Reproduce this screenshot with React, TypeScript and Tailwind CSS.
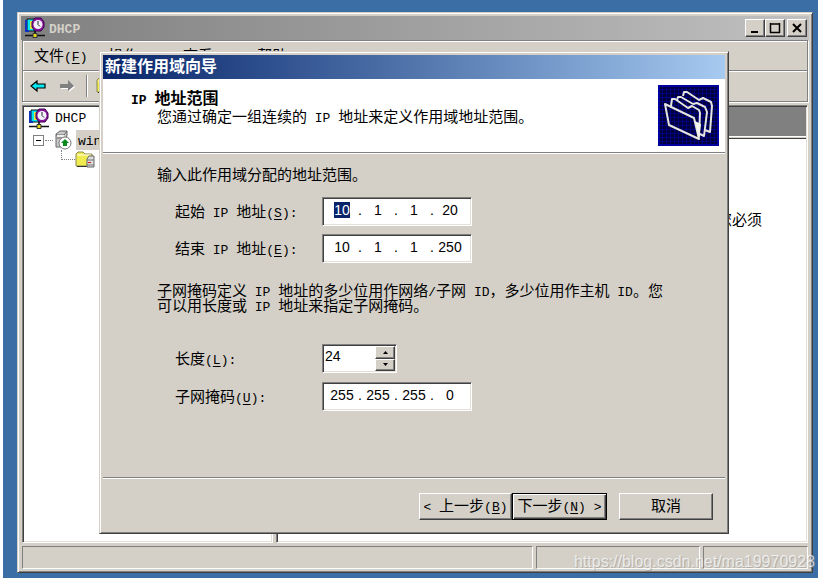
import React from "react";

const raised =
  "border border-t-[#d4d0c8] border-l-[#d4d0c8] border-r-[#404040] border-b-[#404040] shadow-[inset_1px_1px_0_#ffffff,inset_-1px_-1px_0_#808080]";
const raisedButton =
  "bg-[#d4d0c8] border border-t-white border-l-white border-r-[#404040] border-b-[#404040] shadow-[inset_-1px_-1px_0_#808080]";
const sunken =
  "bg-white border border-t-[#808080] border-l-[#808080] border-r-white border-b-white shadow-[inset_1px_1px_0_#404040,inset_-1px_-1px_0_#e4e0d8]";

/* Sets half-width Latin runs in a narrow mono face beside full-width Chinese. */
function T({ text, hot }: { text: string; hot?: string }) {
  return (
    <>
      {text.split(/([\x20-\x7e]+)/).map((part, i) =>
        i % 2 === 1 ? (
          <span key={i} className="font-['Liberation_Mono',monospace] text-[13px] leading-0 whitespace-pre">
            {part}
          </span>
        ) : (
          part
        ),
      )}
      {hot && (
        <span className="font-['Liberation_Mono',monospace] text-[13px] leading-0">
          (<span className="underline underline-offset-2">{hot}</span>)
        </span>
      )}
    </>
  );
}

function DhcpIcon() {
  return (
    <svg className="shrink-0" width="20" height="22" viewBox="0 0 20 22" aria-hidden="true">
      <path d="M2 2h9v12H2z" fill="#00e5f5" stroke="#111" />
      <path d="M1 3v11h3" fill="none" stroke="#1030c0" strokeWidth="2" />
      <path d="M5 4h3v8H5z" fill="#e8e840" />
      <path d="M10 1h6l3 4v5l-3 4h-6L7 10V5z" fill="#8a159c" stroke="#38004c" />
      <circle cx="13" cy="7.5" r="4.5" fill="#f4f0ff" />
      <path d="M13 4v3.5l2 2" fill="none" stroke="#222" />
      <path d="M10 14v4M0 18.5h20" stroke="#111" strokeWidth="1.6" />
      <path d="M8 16.5h4v4H8z" fill="#e5dc20" stroke="#333" />
    </svg>
  );
}

function ServerIcon() {
  return (
    <svg className="shrink-0" width="17" height="20" viewBox="0 0 17 20" aria-hidden="true">
      <path d="M1 4l4-3h7v4l-2 12H1z" fill="#c9c9c9" stroke="#666" />
      <path d="M1 5h8l3-4M2 8h7" fill="none" stroke="#666" />
      <path d="M2 5h7v2H2z" fill="#eee" />
      <circle cx="10" cy="13" r="6" fill="#fff" stroke="#777" />
      <path d="M10 9l4 4h-2v3H8v-3H6z" fill="#0b8a1e" />
    </svg>
  );
}

function FolderIcon() {
  return (
    <svg className="shrink-0" width="21" height="18" viewBox="0 0 21 18" aria-hidden="true">
      <path d="M1 3l2-2h5l2 2h7v12H1z" fill="#f0ec50" stroke="#8a8750" />
      <path d="M2 4h14" stroke="#fffff0" />
      <path d="M2 15.5h11" stroke="#333" />
      <path d="M12 8l2-3h5v11h-7z" fill="#ddd" stroke="#666" />
      <path d="M12 9h7M12 14h7" stroke="#777" />
      <path d="M13 11.5h3" stroke="#d01818" />
    </svg>
  );
}

function WizardArt() {
  return (
    <svg className="shrink-0" width="61" height="61" viewBox="0 0 61 61" aria-hidden="true">
      <defs>
        <pattern id="grid" width="4" height="4" patternUnits="userSpaceOnUse">
          <path d="M0 0h4v4H0z" fill="#000080" />
          <path d="M1 1h3v3H1z" fill="#000038" />
        </pattern>
      </defs>
      <path d="M0 0h61v61H0z" fill="url(#grid)" />
      <path d="M1 1h59v59H1z" fill="none" stroke="#0000a0" strokeWidth="2" />
      <g fill="none" stroke="#e4e4e0" strokeWidth="2" strokeLinejoin="round">
        <path d="M7 19L36 33L41 54L11 40z" />
        <path d="M13 21L14 14H17L30 23L34 21L41 25L42 28L41 52" />
        <path d="M19 15L20 12H23L35 19L39 18L47 22L49 27L46 51L42 49" />
        <path d="M25 11L26 7H29L41 15L45 13L53 17L54 21L52 47L47 45" />
      </g>
      <path d="M37 36l4 18 2-15z" fill="#f4f4f0" />
    </svg>
  );
}

function CaptionButton({ label, children }: { label: string; children: React.ReactNode }) {
  return (
    <button aria-label={label} className={`flex h-[18px] w-5 items-center justify-center ${raisedButton}`}>
      <svg width="12" height="12" viewBox="0 0 12 12" fill="none" stroke="#000" strokeWidth="2">
        {children}
      </svg>
    </button>
  );
}

function IpField({ id, label, parts, selected }: { id: string; label: string; parts: string[]; selected?: boolean }) {
  return (
    <div
      role="group"
      aria-label={label}
      className={`flex h-[29px] w-[150px] pt-1 pl-1 font-['Liberation_Sans',Arial,sans-serif] text-sm ${sunken}`}
    >
      {parts.map((part, i) => (
        <React.Fragment key={i}>
          {i > 0 && <span className="w-1.5 text-center leading-4">.</span>}
          <input
            id={i === 0 ? id : undefined}
            aria-label={`${label} ${i + 1}`}
            defaultValue={part}
            className={
              selected && i === 0
                ? "mx-[7px] h-4 w-4 bg-[#0a246a] text-center leading-4 text-white outline-none"
                : "h-4 w-[30px] text-center leading-4 outline-none"
            }
          />
        </React.Fragment>
      ))}
    </div>
  );
}

function FieldRow({ id, text, hot, children }: { id: string; text: string; hot: string; children: React.ReactNode }) {
  return (
    <div className="flex items-center pl-[18px]">
      <label htmlFor={id} className="w-[147px] shrink-0">
        <T text={text} hot={hot} />
        <T text=":" />
      </label>
      {children}
    </div>
  );
}

function Wizard() {
  return (
    <section
      aria-label="新建作用域向导"
      className={`absolute top-[51px] left-24 w-[630px] bg-[#d4d0c8] p-[3px] ${raised}`}
    >
      <h2 className="flex h-6 items-center bg-linear-to-r from-[#0a246a] to-[#a6caf0] pl-0.5 text-base font-bold text-white">
        新建作用域向导
      </h2>
      <header className="flex h-[74px] justify-between border-b border-[#808080] bg-white pt-1.5 pr-1.5 pl-7 shadow-[0_1px_0_#ffffff]">
        <div className="pt-[5px]">
          <h3 className="text-base leading-[18px] font-bold">
            <T text="IP 地址范围" />
          </h3>
          <p className="pl-[26px] leading-[18px]">
            <T text="您通过确定一组连续的 IP 地址来定义作用域地址范围。" />
          </p>
        </div>
        <WizardArt />
      </header>
      <div className="h-[324px] pt-3 pr-[60px] pl-[54px] leading-5">
        <p>输入此作用域分配的地址范围。</p>
        <div className="mt-3 flex flex-col gap-2">
          <FieldRow id="start" text="起始 IP 地址" hot="S">
            <IpField id="start" label="起始 IP 地址" parts={["10", "1", "1", "20"]} selected />
          </FieldRow>
          <FieldRow id="end" text="结束 IP 地址" hot="E">
            <IpField id="end" label="结束 IP 地址" parts={["10", "1", "1", "250"]} />
          </FieldRow>
        </div>
        <p className="mt-5 leading-[15px] whitespace-nowrap">
          <T text="子网掩码定义 IP 地址的多少位用作网络/子网 ID，多少位用作主机 ID。您" />
          <br />
          <T text="可以用长度或 IP 地址来指定子网掩码。" />
        </p>
        <div className="mt-[31px] flex flex-col gap-[9px]">
          <FieldRow id="length" text="长度" hot="L">
            <div className={`flex h-[29px] w-[75px] p-px ${sunken}`}>
              <input
                id="length"
                defaultValue="24"
                className="h-5 min-w-0 flex-1 pl-px font-['Liberation_Sans',Arial,sans-serif] text-sm outline-none"
              />
              <div className="flex w-5 flex-col">
                <button aria-label="增加" className={`flex flex-1 items-center justify-center ${raisedButton}`}>
                  <svg width="5" height="3" viewBox="0 0 5 3">
                    <path d="M0 3h5L2.5 0z" />
                  </svg>
                </button>
                <button aria-label="减少" className={`flex flex-1 items-center justify-center ${raisedButton}`}>
                  <svg width="5" height="3" viewBox="0 0 5 3">
                    <path d="M0 0h5L2.5 3z" />
                  </svg>
                </button>
              </div>
            </div>
          </FieldRow>
          <FieldRow id="mask" text="子网掩码" hot="U">
            <IpField id="mask" label="子网掩码" parts={["255", "255", "255", "0"]} />
          </FieldRow>
        </div>
      </div>
      <footer className="flex justify-end border-t border-[#808080] pt-[15px] pr-3 pb-2.5 shadow-[inset_0_1px_0_#ffffff]">
        <button className={`h-[27px] w-[93px] whitespace-nowrap ${raisedButton}`}>
          <T text="< 上一步" hot="B" />
        </button>
        <button className="h-[27px] w-[95px] border border-black bg-[#d4d0c8] whitespace-nowrap shadow-[inset_1px_1px_0_#ffffff,inset_-1px_-1px_0_#404040,inset_-2px_-2px_0_#808080]">
          <T text="下一步" hot="N" />
          <T text=" >" />
        </button>
        <button className={`ml-3 h-[27px] w-[94px] ${raisedButton}`}>取消</button>
      </footer>
    </section>
  );
}

function Tree() {
  return (
    <ul className={`w-[251px] shrink-0 pt-0.5 pl-1.5 leading-5 ${sunken}`}>
      <li className="flex h-[22px] items-center gap-1.5">
        <DhcpIcon />
        <T text="DHCP" />
      </li>
      <li className="flex h-5 items-center pl-1">
        <button
          aria-label="折叠"
          className="flex h-[11px] w-[11px] items-center justify-center border border-[#808080]"
        >
          <span className="h-px w-[5px] bg-black" />
        </button>
        <span className="mr-0.5 ml-px w-2 border-t border-dotted border-[#808080]" />
        <ServerIcon />
        <span className="ml-1 bg-[#d4d0c8] px-0.5">
          <T text="win" />
        </span>
      </li>
      <li className="flex h-5 items-center pl-8">
        <span className="mb-2.5 h-2.5 w-3.5 border-b border-l border-dotted border-[#808080]" />
        <FolderIcon />
      </li>
    </ul>
  );
}

export default function App() {
  return (
    <div className="flex min-h-screen bg-white pr-1.5 pb-[3px] pl-[3px] font-['Liberation_Sans','Noto_Sans_CJK_SC',sans-serif] text-[15px] text-black">
      <main className="relative flex flex-1 overflow-hidden bg-[#3a6ea5] pt-3 pr-[5px] pb-[5px] pl-3.5">
        <div className={`flex min-w-0 flex-1 flex-col bg-[#d4d0c8] p-[3px] ${raised}`}>
          <h1 className="flex h-6 items-center bg-linear-to-r from-[#808080] to-[#c0c0c0] pr-0.5 pl-1 font-bold text-[#d4d0c8]">
            <DhcpIcon />
            <span className="ml-1 flex-1">
              <T text="DHCP" />
            </span>
            <CaptionButton label="最小化">
              <path d="M2 10h7" />
            </CaptionButton>
            <CaptionButton label="最大化">
              <path d="M1 2h10M1.5 1v10M10.5 1v10M1 10.5h10" strokeWidth="1.5" />
            </CaptionButton>
            <span className="w-0.5" />
            <CaptionButton label="关闭">
              <path d="M2 2l8 8M10 2l-8 8" />
            </CaptionButton>
          </h1>
          <div className="mx-px border border-[#808080] shadow-[inset_1px_1px_0_#ffffff,1px_1px_0_#ffffff]">
            <nav className="flex h-[30px] items-center gap-[21px] border-b border-[#808080] pt-0.5 pl-[11px] whitespace-nowrap shadow-[0_1px_0_#ffffff]">
              <button>
                <T text="文件" hot="F" />
              </button>
              <button>
                <T text="操作" hot="A" />
              </button>
              <button>
                <T text="查看" hot="V" />
              </button>
              <button>
                <T text="帮助" hot="H" />
              </button>
            </nav>
            <div className="flex h-[30px] items-center pl-[7px]">
              <button aria-label="后退">
                <svg width="16" height="14" viewBox="0 0 16 14">
                  <path d="M1 7l6-5v3h8v4H7v3z" fill="#00e8f0" stroke="#000" strokeWidth="1.2" />
                </svg>
              </button>
              <button aria-label="前进" className="ml-[13px]">
                <svg width="17" height="14" viewBox="0 0 17 14">
                  <path d="M2 6h8V3l6 5-6 5v-3H2z" fill="#fff" />
                  <path d="M1 5h8V1l6 6-6 5V9H1z" fill="#808080" />
                </svg>
              </button>
              <span className="ml-2.5 h-[22px] w-0.5 border-r border-l border-l-[#808080] border-r-white" />
              <button aria-label="上一级" className="ml-2">
                <FolderIcon />
              </button>
            </div>
          </div>
          <div className="mt-[3px] flex flex-1 gap-[3px] pr-px pl-px">
            <Tree />
            <div className={`min-w-0 flex-1 p-px ${sunken}`}>
              <div className="h-[29px] bg-[#808080]" />
              <div className="h-[3px] border-y border-t-white border-b-[#404040] bg-[#d4d0c8]" />
              <p className="pt-[70px] pr-11 text-right">要添加新的作用域，您必须</p>
            </div>
          </div>
          <footer className="mt-[3px] flex h-[23px] gap-[3px] px-px">
            <span className="w-[511px] border border-t-[#808080] border-r-white border-b-white border-l-[#808080]" />
            <span className="min-w-0 flex-1 border border-t-[#808080] border-r-white border-b-white border-l-[#808080]" />
            <span className="w-[105px] border border-t-[#808080] border-r-white border-b-white border-l-[#808080]" />
          </footer>
        </div>
        <Wizard />
        <p className="absolute right-[3px] bottom-1 font-['Liberation_Sans',Arial,sans-serif] text-base text-white/70 [text-shadow:1px_1px_1px_#80808080]">
          https://blog.csdn.net/ma19970928
        </p>
      </main>
    </div>
  );
}
